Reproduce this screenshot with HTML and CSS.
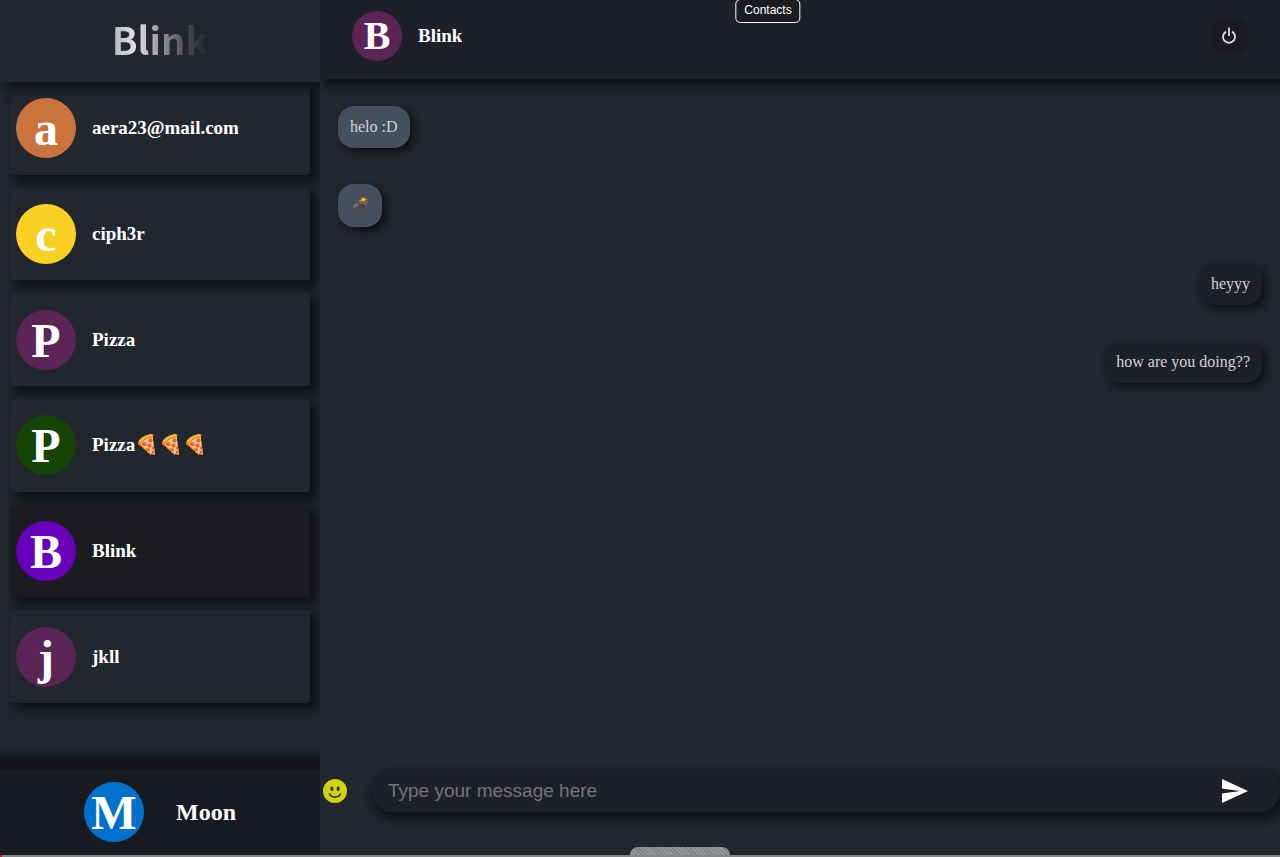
FILE: index.html
```html
<!DOCTYPE html>
<html lang="en">
<head>
<meta charset="utf-8">
<title>Blink</title>
<link rel="stylesheet" href="styles.css">
</head>
<body>
<div class="app">
  <aside class="sidebar">
    <header class="brand"><h1 class="logo">Blink</h1></header>
    <nav class="contacts" aria-label="Contacts">
      <button class="contact" type="button"><span class="avatar orange">a</span><span class="name">aera23@mail.com</span></button>
      <button class="contact" type="button"><span class="avatar yellow">c</span><span class="name">ciph3r</span></button>
      <button class="contact" type="button"><span class="avatar plum">P</span><span class="name">Pizza</span></button>
      <button class="contact" type="button"><span class="avatar green">P</span><span class="name">Pizza🍕🍕🍕</span></button>
      <button class="contact selected" type="button"><span class="avatar violet">B</span><span class="name">Blink</span></button>
      <button class="contact" type="button"><span class="avatar plum">j</span><span class="name">jkll</span></button>
    </nav>
    <footer class="profile"><span class="avatar blue">M</span><h2 class="profile-name">Moon</h2></footer>
  </aside>
  <main class="chat">
    <header class="chat-header">
      <span class="avatar small plum">B</span>
      <h3 class="chat-name">Blink</h3>
      <button class="power" type="button" aria-label="Log out">
        <svg width="16" height="18" viewBox="0 0 16 18" fill="none" stroke="#dcdcf4" stroke-width="1.8"><path d="M7 0.500v8.500M4 4.600A6 6 0 1 0 10 4.600"/></svg>
      </button>
    </header>
    <section class="messages">
      <p class="bubble received">helo :D</p>
      <p class="bubble received">💣</p>
      <p class="bubble sent">heyyy</p>
      <p class="bubble sent">how are you doing??</p>
    </section>
    <form class="composer">
      <button class="emoji" type="button" aria-label="Emoji">
        <svg width="24" height="24" viewBox="0 0 24 24"><circle cx="12" cy="12" r="12" fill="#d0d20b"/><g fill="#22262d"><ellipse cx="8.900" cy="9.700" rx="1.500" ry="2.300"/><ellipse cx="15.100" cy="9.700" rx="1.500" ry="2.300"/></g><path d="M6.500 15c2.300 4.200 8.700 4.200 11 0" fill="none" stroke="#22262d" stroke-width="1.500" stroke-linecap="round"/></svg>
      </button>
      <div class="field">
        <input class="message-input" type="text" aria-label="Message" placeholder="Type your message here">
        <button class="send" type="submit" aria-label="Send">
          <svg width="26" height="24" viewBox="0 0 26 24"><path d="M0 0L26 12L0 24V14.500L18 12L0 9.500Z" fill="#fff"/></svg>
        </button>
      </div>
    </form>
  </main>
</div>
<div class="tooltip" role="tooltip">Contacts</div>
<div class="handle"></div>
<div class="progress"><div class="progress-value"></div></div>
</body>
</html>
```
FILE: styles.css
```css
* { box-sizing: border-box; }
body {
  margin: 0;
  background: #22262d;
  color: #fff;
  font-family: "Liberation Serif", serif;
  overflow: hidden;
}
h1, h2, h3, p { margin: 0; }
button, input { border: 0; background: none; padding: 0; color: inherit; font: inherit; }
button { cursor: pointer; }
svg { display: block; }
.app { display: grid; grid-template-columns: 1fr 3fr; height: 100vh; }
.sidebar { display: flex; flex-direction: column; min-width: 0; overflow: hidden; }
.brand {
  position: relative;
  display: flex;
  align-items: center;
  justify-content: center;
  height: 82px;
  flex: none;
  padding-bottom: 5px;
  background: #22262d;
  box-shadow: 6px 6px 10px #0f1114;
}
.logo {
  font: 700 38px/56px "Noto Sans CJK JP", sans-serif;
  color: transparent;
  background: linear-gradient(90deg, #b5b5b5, #e6e4e4 25%, #b0aeae 42%, #4a4848 78%, #26282c);
  background-clip: text;
  -webkit-background-clip: text;
}
.contacts {
  flex: 1;
  display: grid;
  grid-auto-rows: 1fr;
  gap: 13px;
  padding: 0 10px 66px;
}
.contact {
  display: flex;
  align-items: center;
  gap: 16px;
  padding: 0 6px;
  border-radius: 3px;
  background: #22262d;
  box-shadow: 6px 6px 8px 2px #111316;
  text-align: left;
}
.contact.selected { background: #1b1c20; }
.name { font-size: 19px; font-weight: 700; line-height: 24px; }
.avatar {
  width: 60px;
  height: 60px;
  flex: none;
  border-radius: 50%;
  font-size: 48px;
  font-weight: 700;
  line-height: 61px;
  text-align: center;
}
.avatar.small { width: 50px; height: 50px; font-size: 40px; line-height: 50px; }
.orange { background: #cb733d; }
.yellow { background: #f9d023; }
.plum { background: #5b2456; }
.green { background: #154406; }
.violet { background: #6600ba; }
.blue { background: #0070cc; }
.profile {
  position: relative;
  display: flex;
  align-items: center;
  justify-content: center;
  gap: 32px;
  height: 88px;
  flex: none;
  padding-bottom: 2px;
  background: #171a21;
  box-shadow: 0 -10px 8px 4px #111316;
}
.profile-name { font-size: 24px; line-height: 28px; }
.chat { display: flex; flex-direction: column; min-width: 0; overflow: hidden; }
.chat-header {
  display: flex;
  align-items: center;
  gap: 16px;
  height: 79px;
  flex: none;
  padding: 0 32px 7px;
  background: #1e2027;
  box-shadow: 6px 6px 8px 2px #111316;
}
.chat-name { font-size: 19px; line-height: 24px; }
.power {
  display: grid;
  place-items: center;
  width: 37px;
  height: 36px;
  margin-left: auto;
  border-radius: 10px;
  background: #1b1c20;
}
.messages {
  flex: 1;
  display: flex;
  flex-direction: column;
  align-items: flex-start;
  gap: 36px;
  padding: 27px 18px;
}
.bubble {
  padding: 12px;
  border-radius: 16px;
  color: #d3d3d3;
  font-size: 16px;
  line-height: normal;
  box-shadow: 4px 4px 7px #0f1114;
}
.received { background: #464f5e; }
.sent { align-self: flex-end; background: #1e2027; }
.composer {
  display: flex;
  align-items: center;
  gap: 24px;
  padding: 0 0 45px 3px;
}
.field {
  flex: 1;
  display: flex;
  align-items: center;
  height: 43px;
  border-radius: 22px;
  background: #1e2027;
  box-shadow: 3px 6px 8px 2px #111316;
}
.message-input {
  flex: 1;
  min-width: 0;
  height: 43px;
  padding: 0 17px;
  font: 19px/22px "Liberation Sans", sans-serif;
  outline: 0;
}
.message-input::placeholder { color: #757575; opacity: 1; }
.send { padding: 0 32px; }
.tooltip {
  position: absolute;
  top: -1px;
  left: 60%;
  transform: translateX(-50%);
  padding: 2px 8px 3px;
  border: 1px solid #fff;
  border-radius: 5px;
  background: #1b1c20;
  font: 12px/17px "Liberation Sans", sans-serif;
}
.handle {
  position: fixed;
  bottom: 0;
  left: 630px;
  width: 100px;
  height: 10px;
  border-radius: 8px 8px 0 0;
  background: repeating-linear-gradient(45deg, #7d8285 0 1px, #929698 1px 3px);
}
.progress { position: fixed; bottom: 0; left: 0; right: 0; height: 2px; background: #858585; }
.progress-value { width: 2px; height: 2px; background: #f00; }
```
